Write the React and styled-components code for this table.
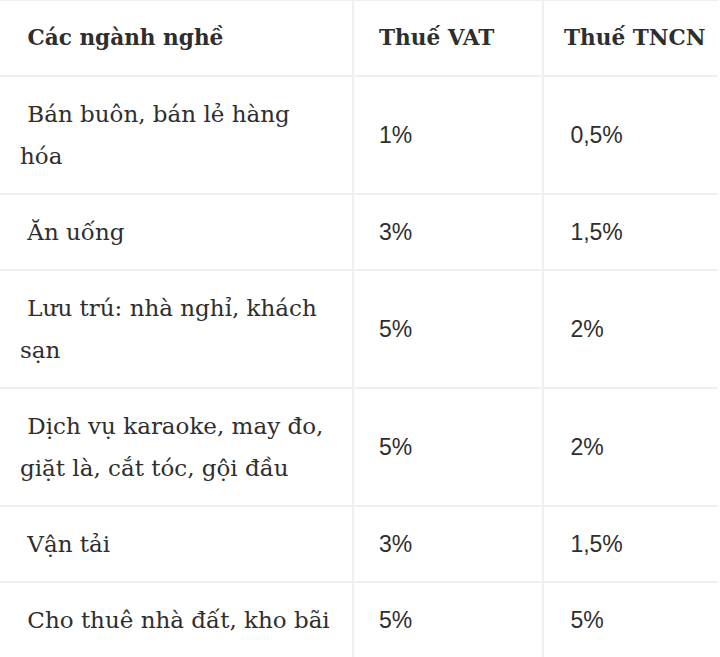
import React from 'react';
import styled, { createGlobalStyle } from 'styled-components';

const rows = [
    { name: '\u00a0Bán buôn, bán lẻ hàng hóa', vat: '1%', tncn: '\u00a00,5%' },
    { name: '\u00a0Ăn uống', vat: '3%', tncn: '\u00a01,5%' },
    { name: '\u00a0Lưu trú: nhà nghỉ, khách sạn', vat: '5%', tncn: '\u00a02%' },
    { name: '\u00a0Dịch vụ karaoke, may đo, giặt là, cắt tóc, gội đầu', vat: '5%', tncn: '\u00a02%' },
    { name: '\u00a0Vận tải', vat: '3%', tncn: '\u00a01,5%' },
    { name: '\u00a0Cho thuê nhà đất, kho bãi', vat: '5%', tncn: '\u00a05%' },
];

function App() {
    return (
        <>
            <GlobalStyle />
            <Table>
                <colgroup>
                    <col style={{ width: 353 }} />
                    <col style={{ width: 190 }} />
                    <col style={{ width: 175 }} />
                </colgroup>
                <thead>
                    <tr>
                        <HeadCell>{'\u00a0'}Các ngành nghề</HeadCell>
                        <HeadCell $wide>Thuế VAT</HeadCell>
                        <HeadCell $last>Thuế TNCN</HeadCell>
                    </tr>
                </thead>
                <tbody>
                    {rows.map((row) => (
                        <tr key={row.name}>
                            <Cell>{row.name}</Cell>
                            <Cell $wide $num>{row.vat}</Cell>
                            <Cell $last $num>{row.tncn}</Cell>
                        </tr>
                    ))}
                </tbody>
            </Table>
        </>
    );
}

const GlobalStyle = createGlobalStyle`
    body {
        margin: 0;
        background: #fff;
    }
`;

const Table = styled.table`
    width: 718px;
    border-collapse: collapse;
    table-layout: fixed;
    border-top: 1px solid #efefef;
    color: #2e2e2e;
`;

const HeadCell = styled.th`
    text-align: left;
    white-space: nowrap;
    font-family: "DejaVu Serif", "Liberation Serif", serif;
    font-weight: bold;
    font-size: 21.6px;
    line-height: 41px;
    padding: 16px 0 17px ${(p) => (p.$wide ? '25px' : '20px')};
    border-bottom: 2px solid #efefef;
    border-right: ${(p) => (p.$last ? 'none' : '2px solid #efefef')};
    vertical-align: middle;
`;

const Cell = styled.td`
    font-family: ${(p) => (p.$num ? '"Liberation Sans", Arial, sans-serif' : '"DejaVu Serif", "Liberation Serif", serif')};
    font-size: 23px;
    line-height: 42px;
    padding: 16px 20px 16px ${(p) => (p.$wide ? '25px' : '20px')};
    border-bottom: 2px solid #efefef;
    border-right: ${(p) => (p.$last ? 'none' : '2px solid #efefef')};
    vertical-align: middle;
`;

export default App;
